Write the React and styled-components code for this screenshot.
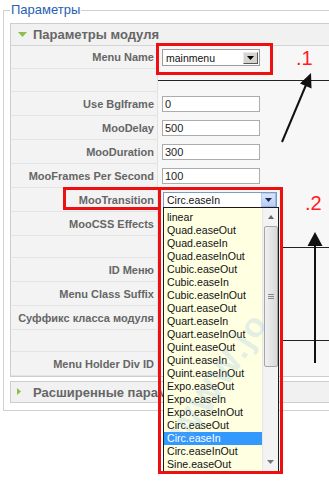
import React from "react";
import styled, { createGlobalStyle } from "styled-components";

const GlobalStyle = createGlobalStyle`
  html, body { margin: 0; padding: 0; background: #fff; }
  body { font-family: "Liberation Sans", Arial, sans-serif; }
  * { box-sizing: border-box; }
`;

const Page = styled.div`
  position: relative;
  width: 329px;
  height: 501px;
  overflow: hidden;
  background: #fff;
`;

const Fieldset = styled.fieldset`
  margin: 2px 0 0 3px;
  padding: 5px 0 7px 6px;
  width: 420px;
  min-width: 0;
  border: 1px solid #d0d0d0;
  border-right: none;
`;

const Legend = styled.legend`
  padding: 0 1px;
  margin: 0;
  font-size: 13px;
  line-height: 16px;
  color: #2661b6;
`;

const Panel = styled.div`
  border: 1px solid #cdcdcd;
  border-right: none;
  background: #f6f6f6;
  & + & {
    margin-top: 4px;
  }
`;

const PaneHeader = styled.div`
  display: flex;
  align-items: center;
  height: ${(p) => (p.$open ? 22 : 20)}px;
  background: #f1f1f1;
  border-bottom: ${(p) => (p.$open ? "1px solid #d4d4d4" : "none")};
  font-size: 13px;
  font-weight: bold;
  color: #666;
  white-space: nowrap;
`;

const Toggle = styled.svg`
  flex: none;
  width: 16px;
  height: 8px;
  margin-left: 6px;
  margin-right: 0;
`;

const Title = styled.span`
  padding-left: 0;
`;

const Row = styled.div`
  display: grid;
  grid-template-columns: 147px 1fr;
  height: ${(p) => p.$h}px;
`;

const Key = styled.div`
  display: flex;
  align-items: center;
  justify-content: flex-end;
  padding-right: 3px;
  background: #f3f3f3;
  border-right: 1px solid #e2e2e2;
  border-bottom: 1px solid #e4e4e4;
  font-size: 11px;
  font-weight: bold;
  color: #666;
  white-space: nowrap;
`;

const Value = styled.div`
  position: relative;
  display: flex;
  align-items: center;
  padding-left: ${(p) => (p.$pad != null ? p.$pad : 4)}px;
  background: #f7f7f7;
`;

const TextInput = styled.input`
  width: 98px;
  height: 16px;
  margin: 0;
  padding: 0 0 0 2px;
  border: 1px solid #acacac;
  background: #fff;
  font-family: "Liberation Sans", Arial, sans-serif;
  font-size: 11px;
  color: #222;
  outline: none;
`;

const SelectBox = styled.div`
  position: relative;
  display: flex;
  align-items: center;
  width: ${(p) => p.$w}px;
  height: ${(p) => p.$hgt}px;
  border: 1px solid ${(p) => (p.$focus ? "#7f9db9" : "#9c9c9c")};
  background: #fff;
  font-size: 10.5px;
  color: #111;
  padding-left: 3px;
`;

const SelectText = styled.span`
  flex: 1;
  white-space: nowrap;
`;

const DropButton = styled.div`
  display: flex;
  align-items: center;
  justify-content: center;
  width: 15px;
  height: ${(p) => (p.$focus ? 14 : 12)}px;
  margin-right: ${(p) => (p.$focus ? 0 : 1)}px;
  border: 1px solid ${(p) => (p.$focus ? "#9fb6e3" : "#555")};
  border-top-color: ${(p) => (p.$focus ? "#b9cbf0" : "#e8e8e8")};
  border-left-color: ${(p) => (p.$focus ? "#b9cbf0" : "#e8e8e8")};
  background: ${(p) =>
    p.$focus ? "linear-gradient(#d9e5fd, #b8cdf8)" : "#d6d3ce"};
`;

const Caret = styled.svg`
  width: 7px;
  height: 4px;
`;

const DropList = styled.div`
  position: absolute;
  top: 14px;
  left: -1px;
  z-index: 5;
  display: flex;
  width: 116px;
  height: 265px;
  border: 1px solid #1a1a1a;
  background: #ffffe1;
`;

const Items = styled.div`
  flex: 1;
  padding-top: 3px;
  overflow: hidden;
`;

const Item = styled.div`
  height: 13px;
  line-height: 13px;
  padding-left: 3px;
  font-size: 10.6px;
  color: ${(p) => (p.$sel ? "#fff" : "#111")};
  background: ${(p) => (p.$sel ? "#3399ff" : "transparent")};
  white-space: nowrap;
`;

const ScrollBar = styled.div`
  display: flex;
  flex-direction: column;
  align-items: center;
  width: 16px;
  background: #f3f3f3;
  border-left: 1px solid #e6e6e6;
`;

const ScrollArrow = styled.div`
  display: flex;
  align-items: center;
  justify-content: center;
  height: 18px;
  width: 100%;
`;

const Thumb = styled.div`
  display: flex;
  align-items: center;
  justify-content: center;
  width: 14px;
  height: 141px;
  border: 1px solid #a6a6a6;
  border-radius: 2px;
  background: linear-gradient(to right, #f0f0f0, #d9d9d9);
`;

const Grip = styled.div`
  width: 6px;
  height: 6px;
  background: repeating-linear-gradient(
    to bottom,
    #888 0,
    #888 1px,
    transparent 1px,
    transparent 2px
  );
`;

const Spacer = styled.div`
  flex: 1;
`;

const Overlay = styled.div`
  position: absolute;
  inset: 0;
  z-index: 10;
  pointer-events: none;
`;

const RedBox = styled.div`
  position: absolute;
  left: ${(p) => p.$x}px;
  top: ${(p) => p.$y}px;
  width: ${(p) => p.$w}px;
  height: ${(p) => p.$h}px;
  border: 3px solid #ee1010;
`;

const Mark = styled.span`
  position: absolute;
  left: ${(p) => p.$x}px;
  top: ${(p) => p.$y}px;
  font-size: 20px;
  line-height: 20px;
  color: #ff1d1d;
`;

const Watermark = styled.span`
  position: absolute;
  left: 196px;
  top: 410px;
  font-size: 34px;
  font-weight: bold;
  letter-spacing: 2px;
  color: rgba(110, 170, 235, 0.2);
  transform: rotate(-57deg);
  transform-origin: left bottom;
  white-space: nowrap;
`;

const Drawing = styled.svg`
  position: absolute;
  left: 0;
  top: 0;
`;

const transitions = [
  "linear",
  "Quad.easeOut",
  "Quad.easeIn",
  "Quad.easeInOut",
  "Cubic.easeOut",
  "Cubic.easeIn",
  "Cubic.easeInOut",
  "Quart.easeOut",
  "Quart.easeIn",
  "Quart.easeInOut",
  "Quint.easeOut",
  "Quint.easeIn",
  "Quint.easeInOut",
  "Expo.easeOut",
  "Expo.easeIn",
  "Expo.easeInOut",
  "Circ.easeOut",
  "Circ.easeIn",
  "Circ.easeInOut",
  "Sine.easeOut",
];

const CaretIcon = ({ color }) => (
  <Caret viewBox="0 0 7 4">
    <polygon points="0,0 7,0 3.5,4" fill={color} />
  </Caret>
);

const rows = [
  { key: "Menu Name", h: 23, type: "menu" },
  { key: "", h: 23 },
  { key: "Use BgIframe", h: 24, input: "0" },
  { key: "MooDelay", h: 24, input: "500" },
  { key: "MooDuration", h: 24, input: "300" },
  { key: "MooFrames Per Second", h: 24, input: "100" },
  { key: "MooTransition", h: 24, type: "transition" },
  { key: "MooCSS Effects", h: 24 },
  { key: "", h: 22 },
  { key: "ID Меню", h: 24 },
  { key: "Menu Class Suffix", h: 24 },
  { key: "Суффикс класса модуля", h: 24 },
  { key: "", h: 22 },
  { key: "Menu Holder Div ID", h: 24 },
];

function ValueContent({ row }) {
  if (row.type === "menu") {
    return (
      <SelectBox $w={98} $hgt={17}>
        <SelectText>mainmenu</SelectText>
        <DropButton>
          <CaretIcon color="#000" />
        </DropButton>
      </SelectBox>
    );
  }
  if (row.type === "transition") {
    return (
      <SelectBox $w={114} $hgt={16} $focus>
        <SelectText>Circ.easeIn</SelectText>
        <DropButton $focus>
          <CaretIcon color="#1d2a4d" />
        </DropButton>
        <DropList>
          <Items>
            {transitions.map((t) => (
              <Item key={t} $sel={t === "Circ.easeIn"}>
                {t}
              </Item>
            ))}
          </Items>
          <ScrollBar>
            <ScrollArrow>
              <svg width="6" height="4" viewBox="0 0 6 4">
                <polygon points="0,4 6,4 3,0" fill="#666" />
              </svg>
            </ScrollArrow>
            <Thumb>
              <Grip />
            </Thumb>
            <Spacer />
            <ScrollArrow>
              <svg width="7" height="4" viewBox="0 0 7 4">
                <polygon points="0,0 7,0 3.5,4" fill="#777" />
              </svg>
            </ScrollArrow>
          </ScrollBar>
        </DropList>
      </SelectBox>
    );
  }
  if (row.input != null) {
    return <TextInput readOnly value={row.input} />;
  }
  return null;
}

export default function App() {
  return (
    <Page>
      <GlobalStyle />
      <Fieldset>
        <Legend>Параметры</Legend>
        <Panel>
          <PaneHeader $open>
            <Toggle viewBox="0 0 16 8">
              <polygon points="1,1 10,1 5.5,6" fill="#8dc046" />
            </Toggle>
            <Title>Параметры модуля</Title>
          </PaneHeader>
          {rows.map((r, i) => (
            <Row key={i} $h={r.h}>
              <Key>{r.key}</Key>
              <Value $pad={r.type === "transition" ? 5 : 4}>
                <ValueContent row={r} />
              </Value>
            </Row>
          ))}
        </Panel>
        <Panel>
          <PaneHeader>
            <Toggle viewBox="0 0 16 8">
              <polygon points="0,0 4,3.5 0,7" fill="#8dc046" />
            </Toggle>
            <Title>Расширенные параметры</Title>
          </PaneHeader>
        </Panel>
      </Fieldset>

      <Overlay>
        <Watermark>WWW.jo</Watermark>
        <Drawing width="329" height="501" viewBox="0 0 329 501">
          <line x1="158" y1="80.5" x2="329" y2="80.5" stroke="#222" strokeWidth="1" />
          <line x1="283" y1="247.5" x2="329" y2="247.5" stroke="#222" strokeWidth="1" />
          <line x1="283" y1="340.5" x2="329" y2="340.5" stroke="#222" strokeWidth="1" />
          <line x1="282" y1="142" x2="306" y2="85" stroke="#111" strokeWidth="2" />
          <polygon points="311,73 311.5,88.5 300,83.5" fill="#111" />
          <line x1="315" y1="363" x2="315" y2="244" stroke="#111" strokeWidth="2" />
          <polygon points="315,232 307.5,246 322.5,246" fill="#111" />
        </Drawing>
        <RedBox $x={156} $y={43} $w={117} $h={32} />
        <RedBox $x={63} $y={187} $w={98} $h={23} />
        <RedBox $x={158} $y={187} $w={125} $h={287} />
        <Mark $x={296} $y={48}>.1</Mark>
        <Mark $x={305} $y={193}>.2</Mark>
      </Overlay>
    </Page>
  );
}
